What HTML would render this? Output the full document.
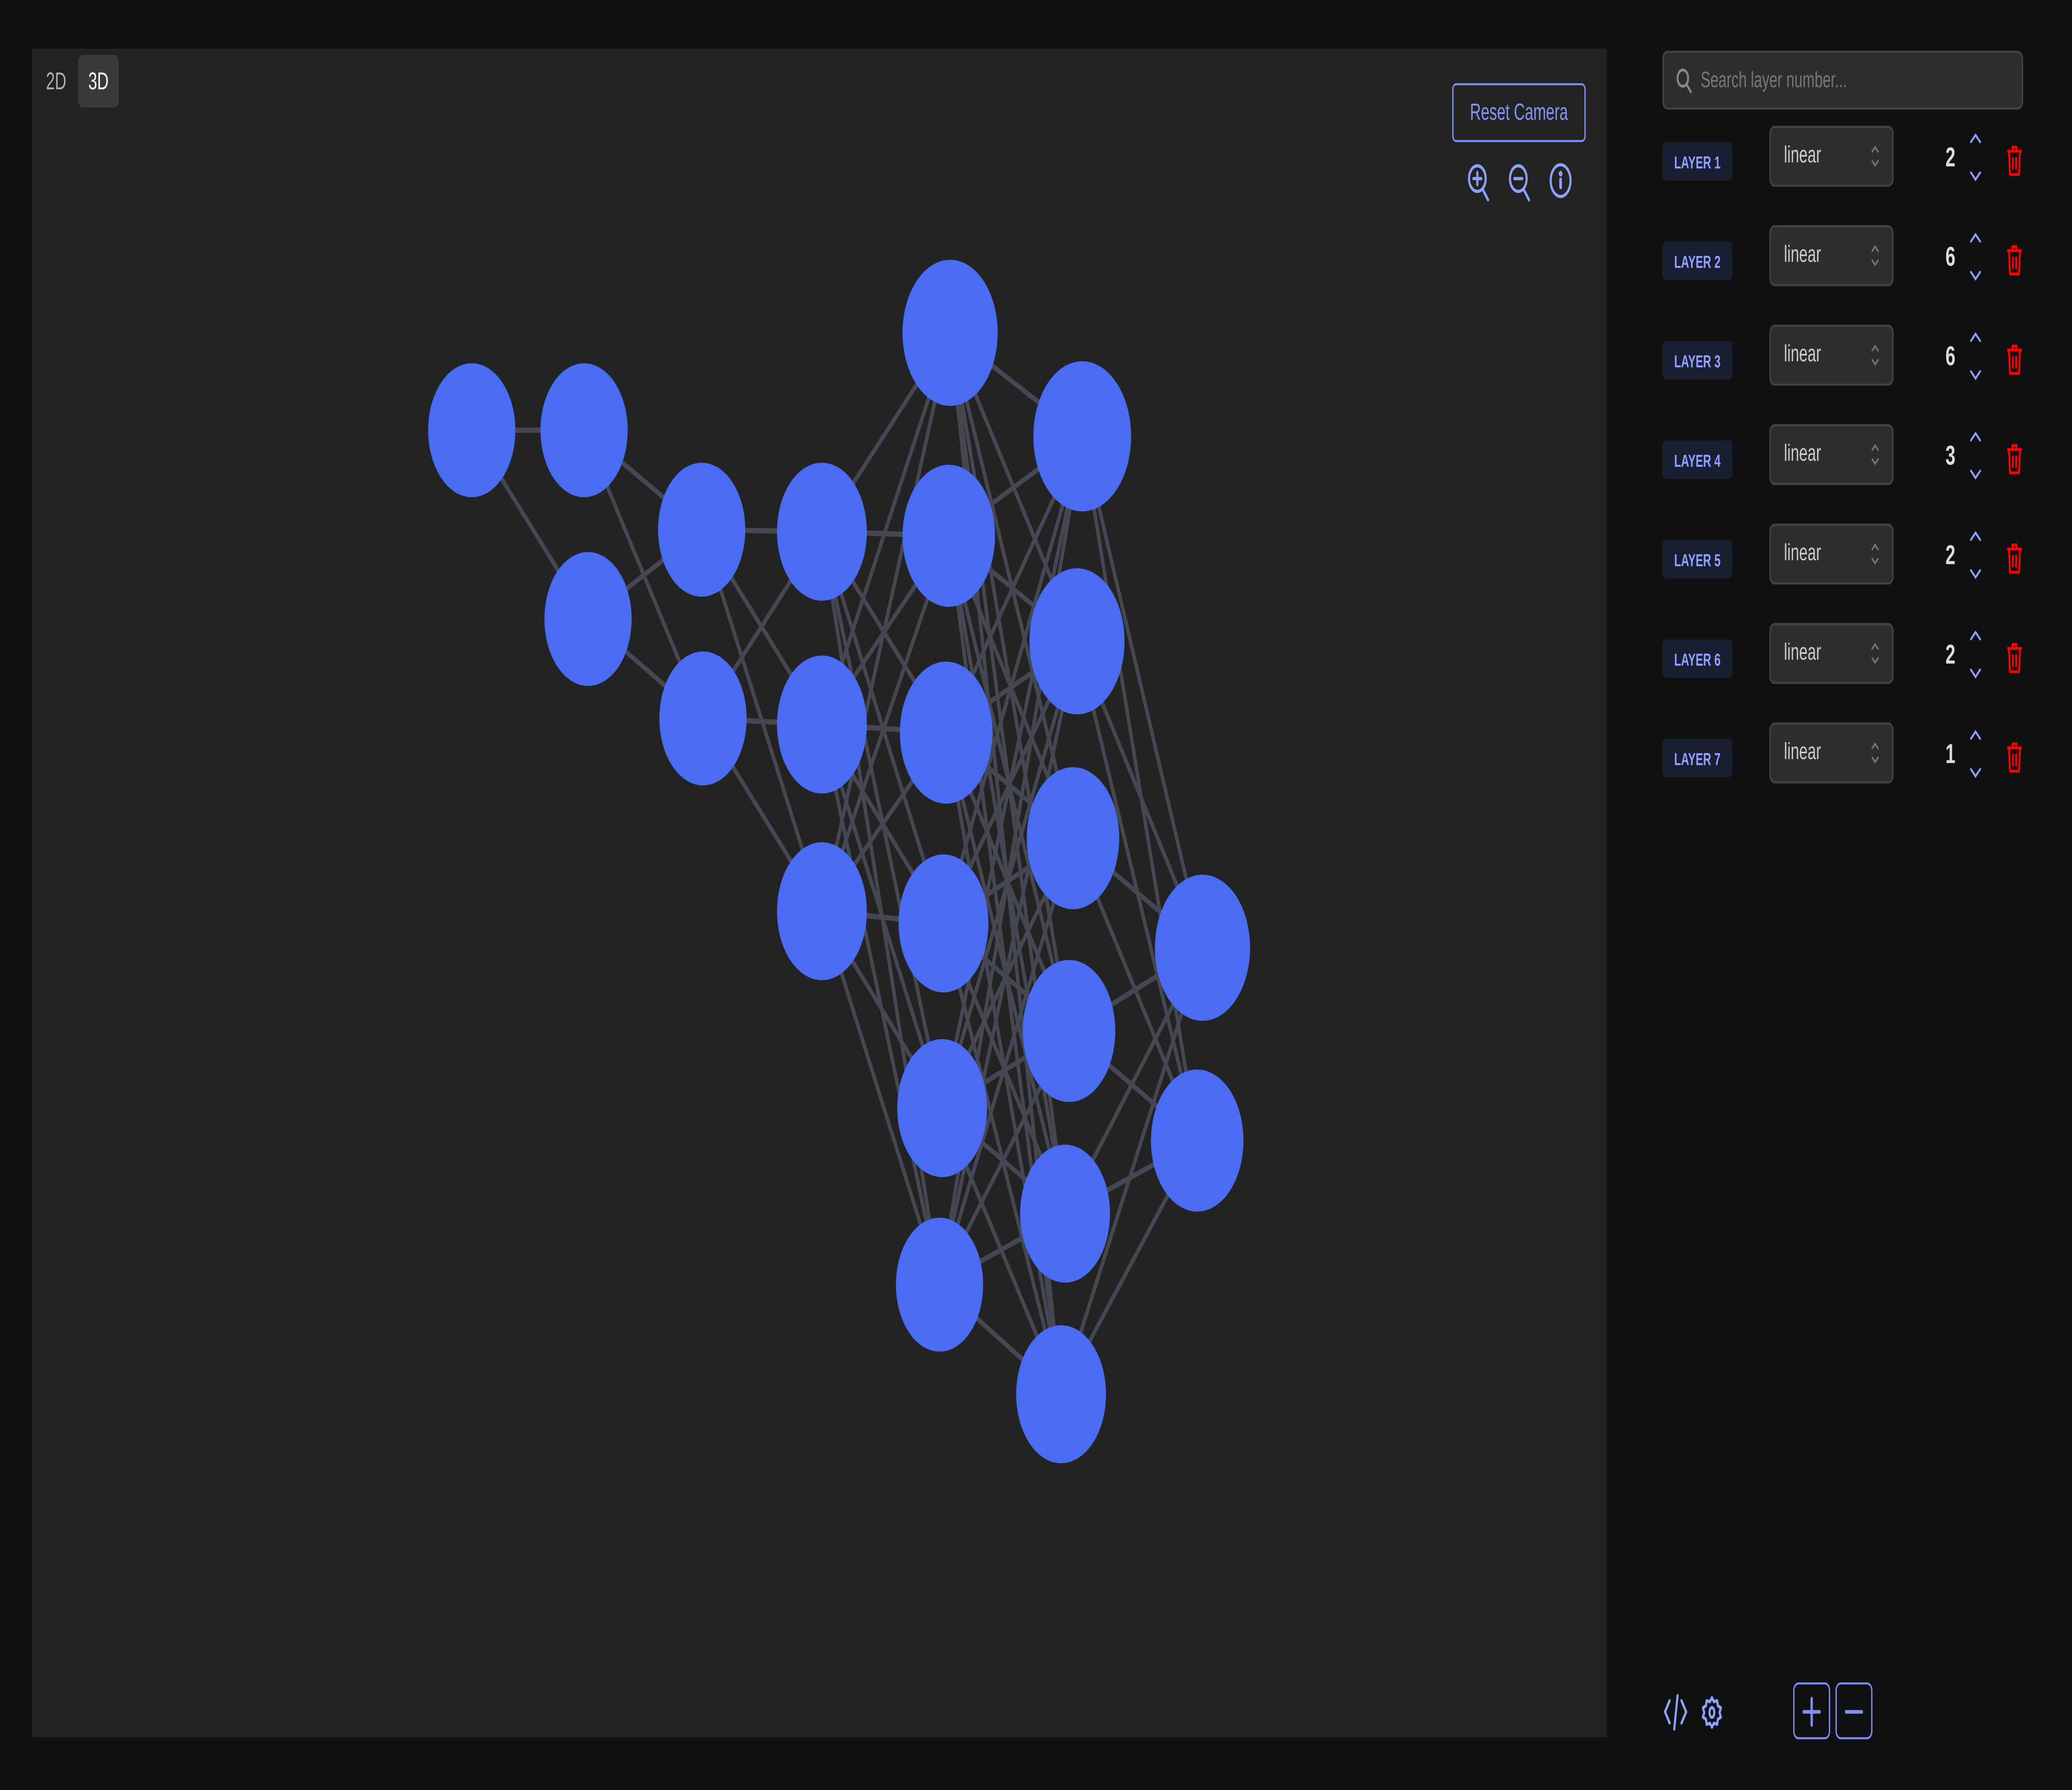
<!DOCTYPE html>
<html><head><meta charset="utf-8">
<style>
html,body{margin:0;padding:0;background:#111113;width:100vw;height:100vh;overflow:hidden}
#w{position:absolute;left:0;top:0;width:1568px;height:882px;transform-origin:0 0;font-family:"Liberation Sans",sans-serif}
.abs{position:absolute}
#canvas{left:24px;top:24px;width:1192px;height:832px;background:#232323}
.tog{top:27px;height:26px;width:31px;border-radius:4px;font-size:12px;line-height:27px;text-align:center}
#reset{left:1099px;top:41px;width:99px;height:27px;border:1px solid #7b8ff7;border-radius:3px;color:#8096f7;font-size:11.5px;line-height:29px;text-align:center}
#search{left:1258px;top:25px;width:271px;height:27px;background:#2e2e2e;border:1px solid #444;border-radius:4px}
#search span{position:absolute;left:28px;top:8px;font-size:11px;color:#777}
.badge{left:1258px;width:53px;height:19px;background:#1a1e33;border-radius:3px;color:#8ea2ff;font-size:8.5px;font-weight:bold;text-align:center;line-height:20px}
.sel{left:1339px;width:92px;height:28px;background:#2e2e2e;border:1px solid #444;border-radius:4px}
.sel span{position:absolute;left:10px;top:8px;font-size:11.5px;color:#ccc}
.num{left:1466px;width:20px;text-align:center;font-size:13.5px;font-weight:bold;color:#ddd}
.btn{top:829px;width:26px;height:26px;border:1px solid #7b8ff7;border-radius:4px}
</style></head><body><div id="w">
<div id="canvas" class="abs">
<svg id="net" width="1192" height="832" viewBox="24 24 1192 832" style="position:absolute;left:0;top:0"></svg>
</div>
<div class="abs tog" style="left:27px;color:#b0b0b0">2D</div>
<div class="abs tog" style="left:59px;background:#3a3a3a;color:#fff">3D</div>
<div id="reset" class="abs">Reset Camera</div>
<svg class="abs" style="left:1109px;top:79px" width="90" height="22" viewBox="0 0 90 22" fill="none" stroke="#8da0fb" stroke-width="1.6" stroke-linecap="round">
<circle cx="9" cy="9" r="6.3"/><path d="M12.8 14l4.3 5.5M9 6v6M6 9h6"/>
<circle cx="40" cy="9" r="6.3"/><path d="M43.8 14l4.3 5.5M37 9h6"/>
<ellipse cx="72" cy="10" rx="7.5" ry="7.8"/><path d="M72 9.5v3.8" stroke-width="2"/><circle cx="72" cy="6.6" r="0.6" fill="#8da0fb"/>
</svg>
<div id="search" class="abs">
<svg style="position:absolute;left:9px;top:7px" width="13" height="13" viewBox="0 0 13 13" fill="none" stroke="#888" stroke-width="1.4" stroke-linecap="round"><circle cx="5.5" cy="5.5" r="4"/><path d="M8.5 8.8l3 3.4"/></svg>
<span>Search layer number...</span></div>
<div id="rows"></div>
<svg class="abs" style="left:1258px;top:833px" width="50" height="22" viewBox="0 0 50 22" fill="none" stroke="#8da0fb" stroke-width="1.6" stroke-linecap="round" stroke-linejoin="round">
<path d="M5.5 5L2 10.5l3.5 5.5M14.5 5L18 10.5l-3.5 5.5M11.5 2.5L9 19"/>
<path d="M37.5 3.5l1.5 2 2.5-.5.5 2.5 2.3 1-1 2.3 1 2.3-2.3 1-.5 2.5-2.5-.5-1.5 2-1.5-2-2.5.5-.5-2.5-2.3-1 1-2.3-1-2.3 2.3-1 .5-2.5 2.5.5z"/>
<ellipse cx="37.5" cy="10.8" rx="1.8" ry="2.4"/>
</svg>
<div class="abs btn" style="left:1357px"><svg width="26" height="26" viewBox="0 0 26 26" stroke="#7b8ff7" stroke-width="1.8" stroke-linecap="round"><path d="M13 7v13M7 13.5h12"/></svg></div>
<div class="abs btn" style="left:1389px"><svg width="26" height="26" viewBox="0 0 26 26" stroke="#7b8ff7" stroke-width="1.8" stroke-linecap="round"><path d="M7 13.5h12"/></svg></div>
</div>
<script>
function fit(){var d=document.documentElement;document.getElementById('w').style.transform='scale('+(d.clientWidth/1568)+','+(d.clientHeight/882)+')';}
fit();window.addEventListener('resize',fit);
var vals=[2,6,6,3,2,2,1],rows='';
for(var i=0;i<7;i++){var y=79+49*i;
rows+='<div class="abs badge" style="top:'+(y-9)+'px">LAYER '+(i+1)+'</div>'+
'<div class="abs sel" style="top:'+(y-17)+'px"><span>linear</span><svg style="position:absolute;left:75px;top:8px" width="8" height="12" viewBox="0 0 8 12" fill="none" stroke="#777" stroke-width="1"><path d="M1.5 4L4 1.5 6.5 4M1.5 8L4 10.5 6.5 8"/></svg></div>'+
'<div class="abs num" style="top:'+(y-9)+'px">'+vals[i]+'</div>'+
'<svg class="abs" style="left:1489px;top:'+(y-14)+'px" width="12" height="26" viewBox="0 0 12 26" fill="none" stroke="#8ea2ff" stroke-width="1.2" stroke-linecap="round"><path d="M2.5 5L6 1.5 9.5 5M2.5 20L6 23.5 9.5 20"/></svg>'+
'<svg class="abs" style="left:1518px;top:'+(y-8)+'px" width="13" height="16" viewBox="0 0 13 16" fill="none" stroke="#ff0000" stroke-width="1.4" stroke-linejoin="round"><path d="M1 3.5h11M5 3.5V1.5h3v2M2.3 3.5l.8 11.5h6.8l.8-11.5M5.3 6.5v6M7.7 6.5v6"/></svg>';}
document.getElementById('rows').innerHTML=rows;
var L=[[[357,212,33]],[[442,212,33],[445,305,33]],[[531,261,33],[532,354,33]],[[622,262,34],[622,357,34],[622,449,34]],
[[719,164,36],[718,264,35],[716,361,35],[714,455,34],[713,546,34],[711,633,33]],
[[819,215,37],[815,316,36],[812,413,35],[809,508,35],[806,598,34],[803,687,34]],[[910,467,36],[906,562,35]]];
var s='';
for(var a=0;a<L.length-1;a++)for(var p=0;p<L[a].length;p++)for(var q=0;q<L[a+1].length;q++){var P=L[a][p],Q=L[a+1][q];
s+='<line x1="'+P[0]+'" y1="'+P[1]+'" x2="'+Q[0]+'" y2="'+Q[1]+'" stroke="#454852" stroke-width="2.6"/>';}
for(var a=0;a<L.length;a++)for(var p=0;p<L[a].length;p++){var P=L[a][p];s+='<circle cx="'+P[0]+'" cy="'+P[1]+'" r="'+P[2]+'" fill="#4a6cf2"/>';}
document.getElementById('net').innerHTML=s;
</script>
</body></html>
